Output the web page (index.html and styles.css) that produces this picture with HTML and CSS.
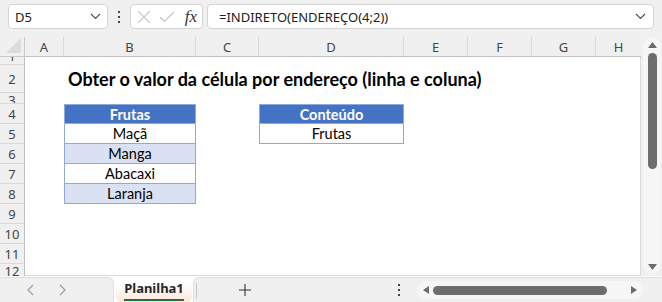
FILE: index.html
```html
<!DOCTYPE html>
<html lang="pt">
<head>
    <meta charset="UTF-8">
    <title>Planilha1</title>
    <link rel="stylesheet" href="styles.css">
</head>
<body>
<div class="app">
    <div class="formula-bar">
        <div class="name-box">
            <span>D5</span>
            <svg width="11" height="7" viewBox="0 0 11 7"><path d="M1 1 L5.5 5.5 L10 1" fill="none" stroke="#505050" stroke-width="1.2"/></svg>
        </div>
        <div class="bar-dots"><i></i><i></i><i></i></div>
        <div class="fx-box">
            <svg width="14" height="14" viewBox="0 0 14 14"><path d="M1 1 L13 13 M13 1 L1 13" stroke="#c4c4c4" stroke-width="1.2"/></svg>
            <svg width="16" height="12" viewBox="0 0 16 12"><path d="M1 6 L5.5 10.5 L15 1" fill="none" stroke="#c4c4c4" stroke-width="1.2"/></svg>
            <span class="fx">fx</span>
        </div>
        <div class="formula-input">
            <span>=INDIRETO(ENDEREÇO(4;2))</span>
            <svg width="11" height="7" viewBox="0 0 11 7"><path d="M1 1 L5.5 5.5 L10 1" fill="none" stroke="#505050" stroke-width="1.2"/></svg>
        </div>
    </div>

    <div class="sheet">
        <div class="corner"><svg width="15" height="15" viewBox="0 0 15 15"><path d="M15 0 L15 15 L0 15 Z" fill="#dcdcdc"/></svg></div>
        <div class="col-head">A</div>
        <div class="col-head">B</div>
        <div class="col-head">C</div>
        <div class="col-head">D</div>
        <div class="col-head">E</div>
        <div class="col-head">F</div>
        <div class="col-head">G</div>
        <div class="col-head last">H</div>

        <div class="vscroll">
            <div class="vtrack">
                <svg width="9" height="6" viewBox="0 0 9 6"><path d="M4.5 0 L9 6 L0 6 Z" fill="#6b6b6b"/></svg>
                <div class="vthumb"></div>
                <div class="vspace"></div>
                <svg width="9" height="6" viewBox="0 0 9 6"><path d="M0 0 L9 0 L4.5 6 Z" fill="#6b6b6b"/></svg>
            </div>
        </div>

        <div class="row-head r-bottom"><span>1</span></div>
        <div class="row-head"><span>2</span></div>
        <div class="row-head r-top"><span>3</span></div>
        <div class="row-head"><span>4</span></div>
        <div class="row-head"><span>5</span></div>
        <div class="row-head"><span>6</span></div>
        <div class="row-head"><span>7</span></div>
        <div class="row-head"><span>8</span></div>
        <div class="row-head"><span>9</span></div>
        <div class="row-head"><span>10</span></div>
        <div class="row-head"><span>11</span></div>
        <div class="row-head r-top last"><span>12</span></div>

        <div class="cells"></div>

        <div class="title">Obter o valor da célula por endereço (linha e coluna)</div>

        <div class="tcell head col-b row-4">Frutas</div>
        <div class="tcell col-b row-5">Maçã</div>
        <div class="tcell band col-b row-6">Manga</div>
        <div class="tcell col-b row-7">Abacaxi</div>
        <div class="tcell band col-b row-8">Laranja</div>

        <div class="tcell head col-d row-4">Conteúdo</div>
        <div class="tcell col-d row-5">Frutas</div>
    </div>

    <div class="tabbar">
        <div class="tab-nav">
            <svg width="7" height="12" viewBox="0 0 7 12"><path d="M6 1 L1 6 L6 11" fill="none" stroke="#9a9a9a" stroke-width="1.1"/></svg>
            <svg width="7" height="12" viewBox="0 0 7 12"><path d="M1 1 L6 6 L1 11" fill="none" stroke="#9a9a9a" stroke-width="1.1"/></svg>
        </div>
        <div class="tab-active"><span>Planilha1</span></div>
        <div class="tab-rest">
            <div class="tab-sep"></div>
            <div class="tab-add">
                <svg width="12" height="12" viewBox="0 0 12 12"><path d="M6 0 L6 12 M0 6 L12 6" stroke="#333" stroke-width="1.1"/></svg>
            </div>
            <div class="tab-fill"></div>
            <div class="bar-dots small"><i></i><i></i><i></i></div>
            <div class="hscroll">
                <svg width="6" height="8" viewBox="0 0 6 8"><path d="M6 0 L6 8 L0 4 Z" fill="#6b6b6b"/></svg>
                <div class="hthumb"></div>
                <div class="hspace"></div>
                <svg width="6" height="8" viewBox="0 0 6 8"><path d="M0 0 L6 4 L0 8 Z" fill="#6b6b6b"/></svg>
            </div>
        </div>
    </div>
</div>
</body>
</html>
```

FILE: styles.css
```css
*{margin:0;padding:0;box-sizing:border-box;}
body{
    background:#fff;
    font-family:"Noto Sans","Open Sans",sans-serif;
    color:#333;
}
.app{
    width:662px;
    height:302px;
    overflow:hidden;
    background:#f0f0f0;
}

/* barra de fórmulas */
.formula-bar{
    display:flex;
    align-items:center;
    height:37px;
    padding:0 8px 4px 8px;
}
.name-box,.fx-box,.formula-input{
    display:flex;
    align-items:center;
    height:25px;
    background:#fff;
    border:1px solid #d4d4d4;
    border-radius:4px;
}
.name-box{
    width:100px;
    padding:0 6px 0 6px;
    justify-content:space-between;
    font-size:13px;
    color:#222;
}
.bar-dots{
    display:flex;
    flex-direction:column;
    gap:3px;
    width:22px;
    align-items:center;
}
.bar-dots i{
    display:block;
    width:2px;
    height:2px;
    background:#444;
}
.fx-box{
    width:73px;
    padding:0 5px 0 6px;
    gap:8px;
}
.fx{
    font-family:"Liberation Serif",serif;
    font-style:italic;
    font-size:17px;
    color:#333;
    margin-left:2px;
}
.formula-input{
    flex:1;
    margin-left:4px;
    padding:0 7px 0 11px;
    justify-content:space-between;
    font-size:13px;
    color:#222;
}

/* grade da planilha */
.sheet{
    display:grid;
    grid-template-columns:25px 39px 132px 63px 145px 64px 64px 64px 45px 21px;
    grid-template-rows:20px 8px 28px 11px repeat(8,20px) 12px;
    font-size:13px;
    color:#444;
}
.corner{
    display:flex;
    align-items:flex-end;
    justify-content:flex-end;
    padding:0 3px 3px 0;
    border-right:1px solid #c8c8c8;
    border-bottom:1px solid #c8c8c8;
}
.col-head{
    display:flex;
    align-items:center;
    justify-content:center;
    border-right:1px solid #dadada;
    border-bottom:1px solid #c0c0c0;
}
.col-head.last{border-right:none;}
.row-head{
    display:flex;
    justify-content:center;
    align-items:center;
    overflow:hidden;
    border-right:1px solid #c0c0c0;
    border-bottom:1px solid #dadada;
    grid-column:1;
}
.row-head span{
    display:block;
    line-height:16px;
    flex-shrink:0;
}
.row-head.r-top{align-items:flex-start;}
.row-head.r-top span{margin-top:-1px;}
.row-head.r-bottom{align-items:flex-end;}
.row-head.last{border-bottom:none;}
.cells{
    grid-column:2 / 10;
    grid-row:2 / 14;
    background:#fff;
    border-right:1px solid #d9d9d9;
    border-bottom:1px solid #d9d9d9;
}
.vscroll{
    grid-column:10;
    grid-row:1 / 14;
    padding:0 1px 2px 2px;
}
.vtrack{
    display:flex;
    flex-direction:column;
    align-items:center;
    height:100%;
    background:#f6f6f6;
    border-radius:9px;
    padding:5px 0 4px 0;
}
.vthumb{
    width:9px;
    height:116px;
    margin-top:5px;
    background:#6e6e6e;
    border-radius:5px;
}
.vspace{flex:1;}

.title{
    grid-column:3 / 10;
    grid-row:3;
    align-self:center;
    padding-left:4px;
    white-space:nowrap;
    font-family:"Lato",sans-serif;
    font-weight:bold;
    font-size:18px;
    color:#000;
}
.tcell{
    display:flex;
    align-items:center;
    justify-content:center;
    font-family:"Lato",sans-serif;
    font-size:14.5px;
    color:#000;
    background:#fff;
    border:1px solid #8ea9db;
    border-top:none;
}
.tcell.head{
    background:#4472c4;
    color:#fff;
    font-weight:bold;
    border-top:1px solid #8ea9db;
}
.tcell.band{background:#d9e1f2;}
.col-b{grid-column:3;}
.col-d{grid-column:5;}
.row-4{grid-row:5;}
.row-5{grid-row:6;}
.row-6{grid-row:7;}
.row-7{grid-row:8;}
.row-8{grid-row:9;}

/* abas */
.tabbar{
    display:flex;
    height:26px;
    background:#fff;
    padding-top:1px;
}
.tab-nav{
    display:flex;
    align-items:center;
    gap:25px;
    width:114px;
    padding-left:27px;
    background:#f0f0f0;
    border-top:1px solid #dedede;
    border-right:1px solid #dedede;
    border-top-right-radius:6px;
}
.tab-active{
    display:flex;
    justify-content:center;
    width:76px;
    margin:-1px 1px 0 2px;
    padding-top:4px;
    background:linear-gradient(to bottom,#fff 30%,#fce6d8);
    border-radius:0 0 6px 6px;
}
.tab-active span{
    height:21px;
    font-weight:bold;
    font-size:13px;
    color:#262626;
    border-bottom:2px solid #1e7145;
    line-height:16px;
}
.tab-rest{
    flex:1;
    display:flex;
    align-items:center;
    background:#f0f0f0;
    border-top:1px solid #dedede;
    border-left:1px solid #dedede;
    border-top-left-radius:6px;
}
.tab-sep{
    width:1px;
    height:15px;
    margin-left:2px;
    background:#c8c8c8;
}
.tab-add{
    display:flex;
    justify-content:center;
    width:96px;
}
.tab-fill{flex:1;}
.bar-dots.small{width:12px;}
.hscroll{
    display:flex;
    align-items:center;
    width:226px;
    height:18px;
    margin:0 19px 0 12px;
    padding:0 6px 0 6px;
    background:#f6f6f6;
    border-radius:9px;
}
.hthumb{
    width:174px;
    height:9px;
    margin-left:4px;
    background:#6e6e6e;
    border-radius:5px;
}
.hspace{flex:1;}
```
